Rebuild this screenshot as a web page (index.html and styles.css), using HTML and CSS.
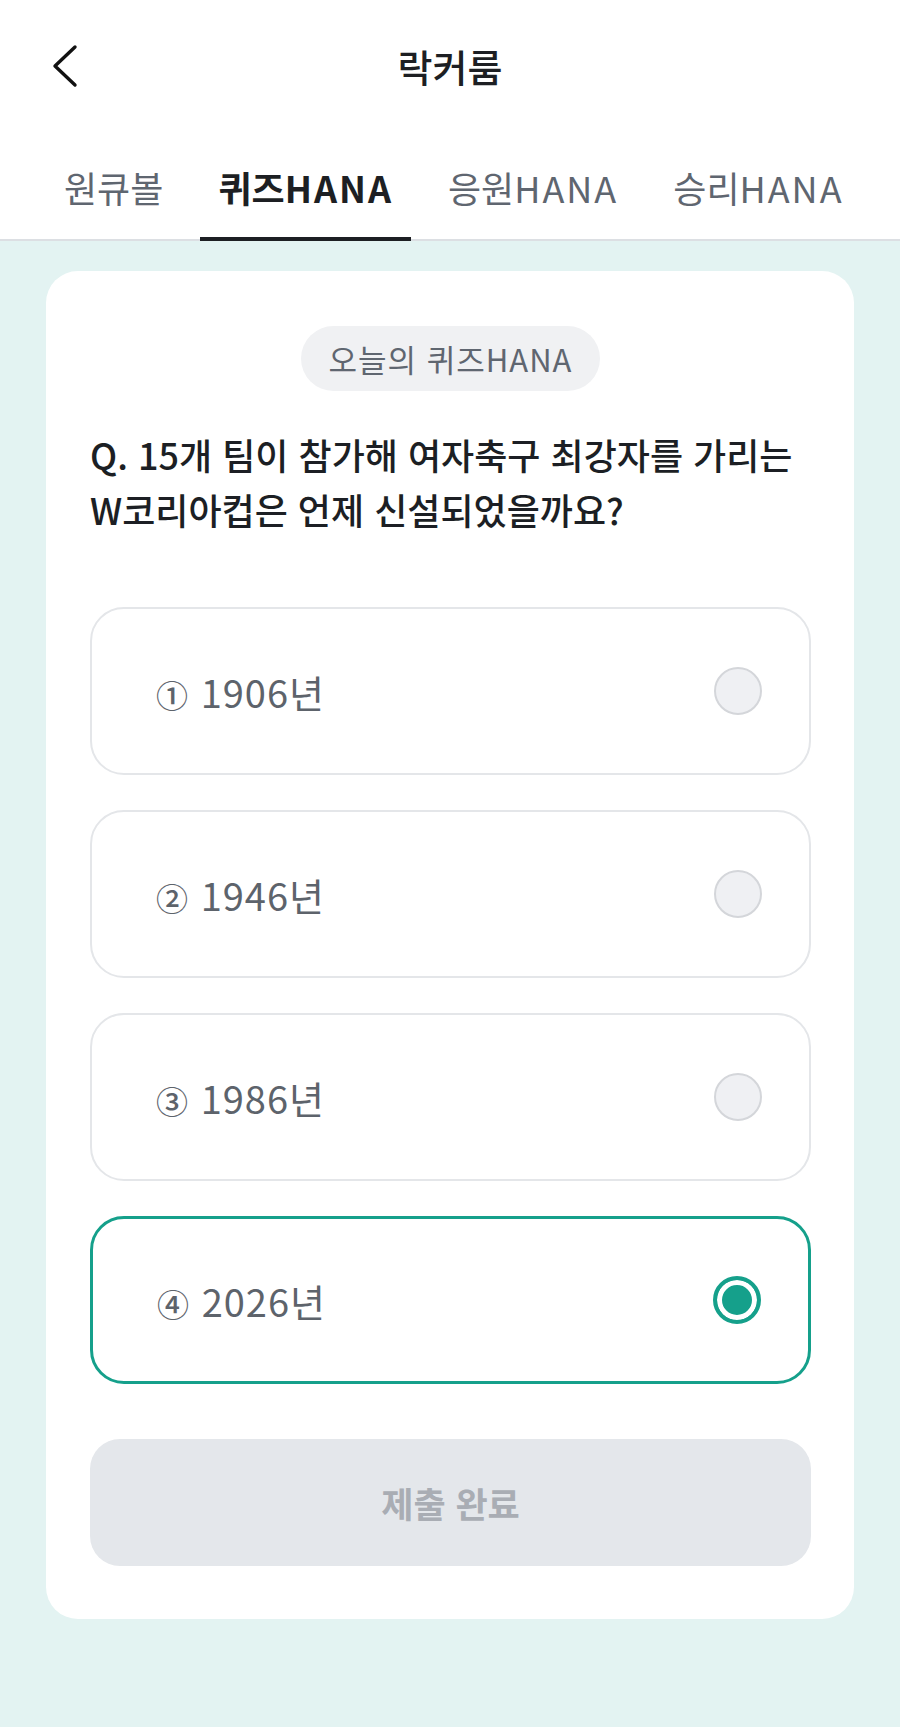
FILE: index.html
```html
<!DOCTYPE html>
<html lang="ko">
<head>
    <meta charset="UTF-8">
    <meta name="viewport" content="width=device-width, initial-scale=1.0">
    <title>락커룸</title>
    <link rel="stylesheet" href="styles.css">
</head>
<body>

    <!-- Top Bar -->
    <header class="top-bar">
        <div class="top-bar-left">
            <button class="back-button" aria-label="뒤로">
                <svg width="30" height="44" viewBox="0 0 30 44">
                    <polyline points="25,3 5,22 25,41" fill="none" stroke="#111" stroke-width="3.4" stroke-linecap="round" stroke-linejoin="round" />
                </svg>
            </button>
        </div>
        <h1 class="page-title">락커룸</h1>
        <div></div>
    </header>

    <!-- Tabs -->
    <nav class="tabs">
        <a class="tab">원큐볼</a>
        <a class="tab active">퀴즈<span class="tab-en">HANA</span></a>
        <a class="tab">응원<span class="tab-en">HANA</span></a>
        <a class="tab">승리<span class="tab-en">HANA</span></a>
    </nav>

    <!-- Quiz -->
    <main class="content">
        <section class="quiz-card">
            <div class="badge-row">
                <span class="quiz-badge">오늘의 퀴즈HANA</span>
            </div>

            <p class="question">Q. 15개 팀이 참가해 여자축구 최강자를 가리는<br>W코리아컵은 언제 신설되었을까요?</p>

            <div class="options">
                <label class="option">
                    <span class="option-text"><span class="option-num">①</span> 1906년</span>
                    <span class="radio"></span>
                </label>
                <label class="option">
                    <span class="option-text"><span class="option-num">②</span> 1946년</span>
                    <span class="radio"></span>
                </label>
                <label class="option">
                    <span class="option-text"><span class="option-num">③</span> 1986년</span>
                    <span class="radio"></span>
                </label>
                <label class="option selected">
                    <span class="option-text"><span class="option-num">④</span> 2026년</span>
                    <span class="radio"></span>
                </label>
            </div>

            <button class="submit-button" disabled>제출 완료</button>
        </section>
    </main>

</body>
</html>
```

FILE: styles.css
```css
/* Basic Reset */
* {
    margin: 0;
    padding: 0;
    box-sizing: border-box;
}

html,
body {
    min-height: 100%;
}

body {
    font-family: "Noto Sans CJK KR", "Noto Sans", sans-serif;
    background-color: #e3f3f2;
    color: #1d1f23;
}

/* Top Bar */
.top-bar {
    display: grid;
    grid-template-columns: 1fr auto 1fr;
    align-items: center;
    height: 120px;
    padding-top: 12px;
    background-color: #fff;
}

.top-bar-left {
    padding-left: 50px;
}

.back-button {
    display: flex;
    background: none;
    border: none;
    cursor: pointer;
}

.page-title {
    font-size: 38px;
    font-weight: 500;
    line-height: 50px;
    color: #1d1f23;
}

/* Tabs */
.tabs {
    display: flex;
    gap: 19px;
    padding: 42px 0 0 46px;
    background-color: #fff;
    border-bottom: 2px solid #dcdfe3;
}

.tab {
    display: block;
    margin-bottom: -2px;
    padding: 0 18px 25px;
    font-size: 36px;
    line-height: 50px;
    color: #5f6670;
    border-bottom: 4px solid transparent;
    white-space: nowrap;
    cursor: pointer;
}

.tab-en {
    letter-spacing: 2px;
}

.tab.active {
    font-weight: 700;
    color: #1d1f23;
    border-bottom-color: #1d1f23;
}

/* Content */
.content {
    padding: 30px 46px 111px;
}

.quiz-card {
    padding: 55px 43px 53px 44px;
    background-color: #fff;
    border-radius: 32px;
}

.badge-row {
    text-align: center;
}

.quiz-badge {
    display: inline-block;
    height: 65px;
    padding: 0 28px;
    font-size: 31px;
    line-height: 65px;
    letter-spacing: 1px;
    color: #5f6670;
    background-color: #f0f1f3;
    border-radius: 33px;
}

.question {
    margin-top: 36px;
    font-size: 36px;
    font-weight: 500;
    line-height: 55px;
    color: #1c1f24;
}

/* Options */
.options {
    display: flex;
    flex-direction: column;
    gap: 35px;
    margin-top: 70px;
}

.option {
    display: flex;
    align-items: center;
    justify-content: space-between;
    height: 168px;
    padding: 0 47px 0 64px;
    border: 2px solid #e4e6e9;
    border-radius: 34px;
    cursor: pointer;
}

.option-text {
    font-size: 38px;
    letter-spacing: 1px;
    color: #5d636b;
}

.option-num {
    font-size: 32px;
    font-weight: 500;
}

.radio {
    width: 48px;
    height: 48px;
    border: 2px solid #d4d6da;
    border-radius: 50%;
    background-color: #eff0f3;
}

.option.selected {
    border: 3px solid #15a08b;
}

.option.selected .radio {
    border: 4px solid #15a08b;
    background-color: #15a08b;
    box-shadow: inset 0 0 0 5px #fff;
}

/* Submit */
.submit-button {
    display: block;
    width: 100%;
    height: 127px;
    margin-top: 55px;
    font-family: inherit;
    font-size: 35px;
    font-weight: 700;
    color: #a9adb4;
    background-color: #e4e7eb;
    border: none;
    border-radius: 30px;
}
```
